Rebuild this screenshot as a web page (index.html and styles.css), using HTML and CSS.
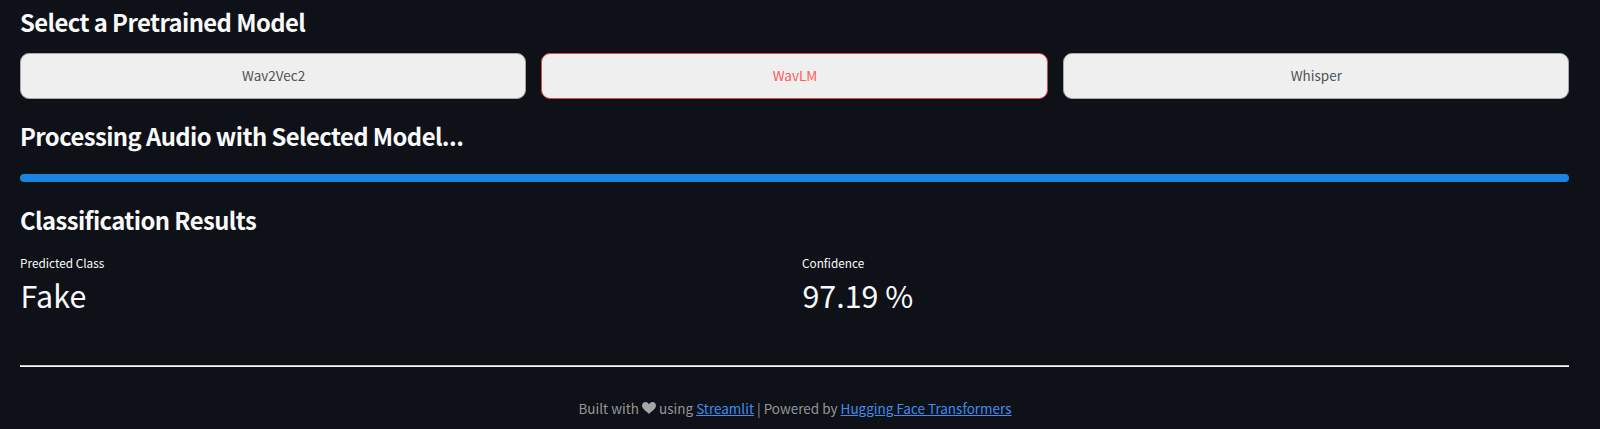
FILE: index.html
```html
<!DOCTYPE html>
<html lang="en">
<head>
<meta charset="utf-8">
<title>Audio Classification</title>
<link rel="stylesheet" href="styles.css">
</head>
<body>
<main class="page">
  <h3 class="heading">Select a Pretrained Model</h3>
  <div class="models">
    <button class="model">Wav2Vec2</button>
    <button class="model model-active">WavLM</button>
    <button class="model">Whisper</button>
  </div>
  <h3 class="heading heading-processing">Processing Audio with Selected Model...</h3>
  <div class="progress"></div>
  <h3 class="heading heading-results">Classification Results</h3>
  <div class="metrics">
    <div class="metric"><div class="label">Predicted Class</div><div class="value">Fake</div></div>
    <div class="metric"><div class="label">Confidence</div><div class="value">97.19 %</div></div>
  </div>
  <hr class="divider">
  <footer class="footer">Built with <svg class="heart" viewBox="0 0 14 12"><path d="M7 12C5.700 10 0 7.500 0 3.600C0 1.500 1.500 0 3.500 0C5.200 0 6.500 1 7 2.600C7.500 1 8.800 0 10.500 0C12.500 0 14 1.500 14 3.600C14 7.500 8.300 10 7 12Z"/></svg> using <a class="link" href="#">Streamlit</a> | Powered by <a class="link" href="#">Hugging Face Transformers</a></footer>
</main>
</body>
</html>
```
FILE: styles.css
```css
body {
  margin: 0;
  background: #0e1117;
  color: #fafafa;
  font-family: "Noto Sans CJK JP", "Noto Sans CJK SC", sans-serif;
  overflow: hidden;
}
.page {
  box-sizing: border-box;
  width: 1600px;
  height: 429px;
  padding: 5px 31px 0 20px;
}
.heading {
  margin: 0;
  font-size: 23.8px;
  line-height: 34px;
  font-weight: 700;
  letter-spacing: -0.56px;
  white-space: nowrap;
}
.models {
  display: grid;
  grid-template-columns: repeat(3, 1fr);
  gap: 15px;
  margin-top: 14px;
}
.model {
  height: 46px;
  padding: 0 0 2px 1px;
  border: 1px solid #a6a7a9;
  border-radius: 9px;
  background: #efefef;
  color: #505256;
  font-family: inherit;
  font-size: 13.5px;
  line-height: 24px;
}
.model-active {
  border-color: #d94a4f;
  color: #ff5a5a;
}
.heading-processing {
  margin-top: 20px;
}
.progress {
  height: 8px;
  margin-top: 21px;
  border-radius: 4px;
  background: #1c83e1;
}
.heading-results {
  margin-top: 21px;
}
.metrics {
  display: grid;
  grid-template-columns: 1fr 1fr;
  gap: 15px;
  margin-top: 16px;
}
.label {
  font-size: 11.8px;
  line-height: 20px;
}
.value {
  padding-left: 0.5px;
  font-size: 30.4px;
  line-height: 44px;
}
.divider {
  height: 1px;
  margin: 48px 0 0;
  border: 0;
  border-top: 1px solid #c4c4c4;
  background: #fafafa;
}
.footer {
  margin-top: 29px;
  padding-left: 1px;
  font-size: 13.5px;
  line-height: 24px;
  text-align: center;
  color: #959697;
}
.heart {
  width: 14px;
  height: 12px;
  fill: #a6a6a6;
}
.link {
  color: #3e8ef0;
  text-decoration: underline;
}
```
